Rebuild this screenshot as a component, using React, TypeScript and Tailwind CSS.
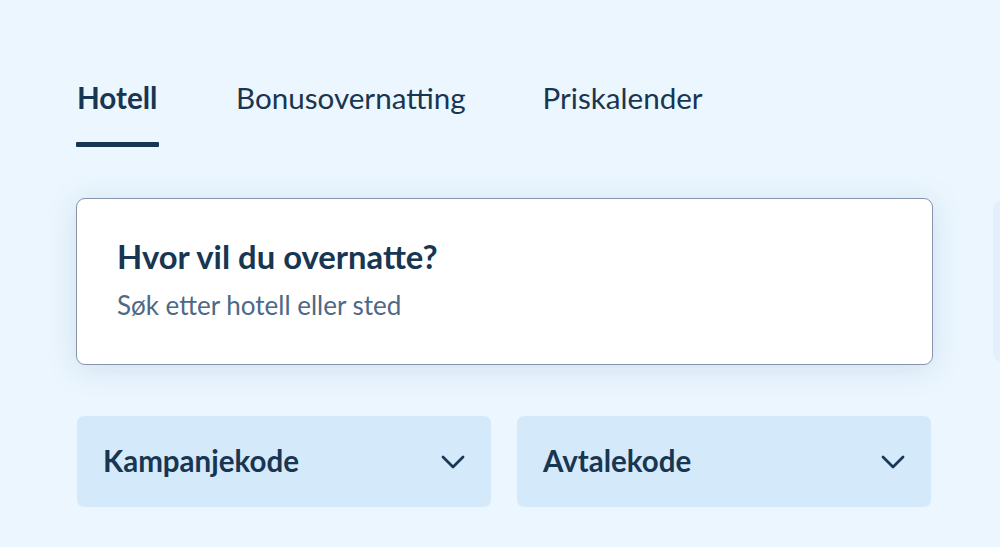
import React from "react";

function Chevron() {
  return (
    <svg width="26" height="16" viewBox="0 0 26 16" fill="none" className="shrink-0">
      <path d="M3 3 L13 13 L23 3" stroke="#1a3855" strokeWidth="2.8" strokeLinecap="round" strokeLinejoin="round" />
    </svg>
  );
}

export default function App() {
  return (
    <div className="w-[1000px] h-[547px] overflow-hidden bg-[#ebf6fe] font-['Lato','Noto_Sans',sans-serif] text-[#183552]">
      <div className="pl-[76px] pt-[80px]">
        <div className="flex gap-[77px] pl-[1px]">
          <div className="flex flex-col">
            <span className="text-[29.6px] leading-[36px] font-bold">Hotell</span>
            <div className="mt-[26px] h-[5px] w-[83px] -ml-[1px] bg-[#183552] rounded-[1px]" />
          </div>
          <span className="text-[29.6px] leading-[36px]">Bonusovernatting</span>
          <span className="text-[29.6px] leading-[36px]">Priskalender</span>
        </div>

        <div className="mt-[51px] flex gap-[60px]">
          <div className="w-[857px] h-[167px] shrink-0 rounded-[9px] border border-[#8596ab] bg-white shadow-[0_4px_28px_rgba(120,150,190,0.22)] pl-[40px] pt-[38px]">
            <div className="text-[32.8px] leading-[40px] font-bold">Hvor vil du overnatte?</div>
            <div className="mt-[12px] text-[26px] leading-[32px] text-[#4e6985]">Søk etter hotell eller sted</div>
          </div>
          <div className="w-[60px] h-[162px] mt-[2px] shrink-0 rounded-[9px] bg-[#e3f0fb]" />
        </div>

        <div className="mt-[51px] flex gap-[26px] pl-[1px]">
          <div className="w-[414px] h-[91px] rounded-[7px] bg-[#d4eafa] flex items-center justify-between pl-[26px] pr-[25px]">
            <span className="text-[29.5px] font-bold">Kampanjekode</span>
            <Chevron />
          </div>
          <div className="w-[414px] h-[91px] rounded-[7px] bg-[#d4eafa] flex items-center justify-between pl-[26px] pr-[25px]">
            <span className="text-[29.5px] font-bold">Avtalekode</span>
            <Chevron />
          </div>
        </div>
      </div>
    </div>
  );
}
